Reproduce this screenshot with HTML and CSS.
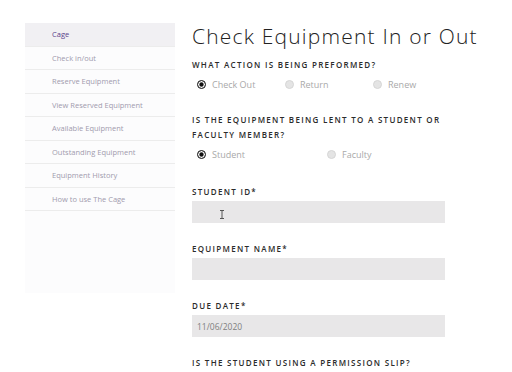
FILE: index.html
```html
<!DOCTYPE html>
<html lang="en">
<head>
    <meta charset="UTF-8">
    <title>The Cage - Check Equipment</title>
    <link rel="stylesheet" href="styles.css">
</head>
<body>
    <div class="layout">
        <!-- Sidebar -->
        <nav class="sidebar">
            <a class="nav-item active" href="#">Cage</a>
            <a class="nav-item" href="#">Check in/out</a>
            <a class="nav-item" href="#">Reserve Equipment</a>
            <a class="nav-item" href="#">View Reserved Equipment</a>
            <a class="nav-item" href="#">Available Equipment</a>
            <a class="nav-item" href="#">Outstanding Equipment</a>
            <a class="nav-item" href="#">Equipment History</a>
            <a class="nav-item" href="#">How to use The Cage</a>
        </nav>
        <!-- Form -->
        <main class="content">
            <h1>Check Equipment In or Out</h1>
            <div class="field choice">
                <div class="label">What action is being preformed?</div>
                <div class="radios">
                    <label class="radio w-action"><input type="radio" name="action" checked> Check Out</label>
                    <label class="radio w-action"><input type="radio" name="action"> Return</label>
                    <label class="radio"><input type="radio" name="action"> Renew</label>
                </div>
            </div>
            <div class="field choice last-choice">
                <div class="label">Is the equipment being lent to a student or<br>faculty member?</div>
                <div class="radios">
                    <label class="radio w-who"><input type="radio" name="who" checked> Student</label>
                    <label class="radio"><input type="radio" name="who"> Faculty</label>
                </div>
            </div>
            <div class="field">
                <div class="label short">Student ID*</div>
                <div class="input-wrap">
                    <input class="text-input" type="text">
                    <svg class="ibeam" width="6" height="9" viewBox="0 0 6 9"><path d="M1 .5h4M3 .5v8M1 8.5h4" stroke="#555" stroke-width="1" fill="none"/></svg>
                </div>
            </div>
            <div class="field">
                <div class="label short">Equipment Name*</div>
                <input class="text-input" type="text">
            </div>
            <div class="field">
                <div class="label short">Due Date*</div>
                <input class="text-input" type="text" value="11/06/2020">
            </div>
            <div class="field">
                <div class="label short">Is the student using a permission slip?</div>
            </div>
        </main>
    </div>
</body>
</html>
```

FILE: styles.css
```css
:root {
    --purple: #5a3f8c;
    --nav-text: #a19bad;
    --label: #2b2b2b;
    --muted: #a9a9a9;
    --input-bg: #e8e7e8;
    --line: #ececec;
}
body {
    margin: 0;
    background: #fff;
    font-family: 'Open Sans', Arial, sans-serif;
    color: var(--label);
    overflow: hidden;
}
.layout {
    display: flex;
    align-items: flex-start;
    padding: 23px 0 0 25px;
}
.sidebar {
    width: 150px;
    height: 270px;
    background: #fcfcfd;
    display: flex;
    flex-direction: column;
}
.nav-item {
    display: block;
    height: 23.5px;
    line-height: 23.5px;
    padding-left: 27px;
    font-size: 7.5px;
    color: var(--nav-text);
    text-decoration: none;
    border-bottom: 1px solid var(--line);
    box-sizing: border-box;
}
.nav-item.active {
    background: #f1f0f3;
    color: var(--purple);
}
.content {
    margin-left: 17px;
    width: 300px;
}
h1 {
    font-weight: 300;
    font-size: 21px;
    letter-spacing: 1.2px;
    color: #222;
    margin: 0 0 8px 0;
    line-height: 26px;
    white-space: nowrap;
}
.field {
    margin-bottom: 20px;
}
.field.choice {
    margin-bottom: 21px;
}
.field.last-choice {
    margin-bottom: 25px;
}
.label {
    font-size: 8px;
    font-weight: 600;
    letter-spacing: 1.3px;
    text-transform: uppercase;
    line-height: 15px;
    margin-bottom: 5px;
    white-space: nowrap;
}
.label.short {
    line-height: 11px;
    margin-bottom: 4px;
}
.radios {
    display: flex;
    align-items: center;
    height: 14px;
    padding-left: 5px;
}
.radio {
    display: flex;
    align-items: center;
    gap: 6px;
    font-size: 9px;
    color: var(--muted);
}
.w-action { width: 88px; }
.w-who { width: 130px; }
.radio input {
    appearance: none;
    margin: 0;
    width: 9px;
    height: 9px;
    border-radius: 50%;
    background: #e4e4e4;
    border: 1px solid #d6d6d6;
    box-sizing: border-box;
}
.radio input:checked {
    background: #111;
    border: 1.5px solid #333;
    box-shadow: inset 0 0 0 1.3px #fff;
}
.input-wrap {
    position: relative;
    width: 253px;
}
.text-input {
    display: block;
    width: 253px;
    height: 22px;
    border: none;
    background: var(--input-bg);
    padding: 0 5px;
    box-sizing: border-box;
    font-family: inherit;
    font-size: 8.5px;
    color: #808080;
    outline: none;
}
.ibeam {
    position: absolute;
    left: 27px;
    top: 9px;
}
```
